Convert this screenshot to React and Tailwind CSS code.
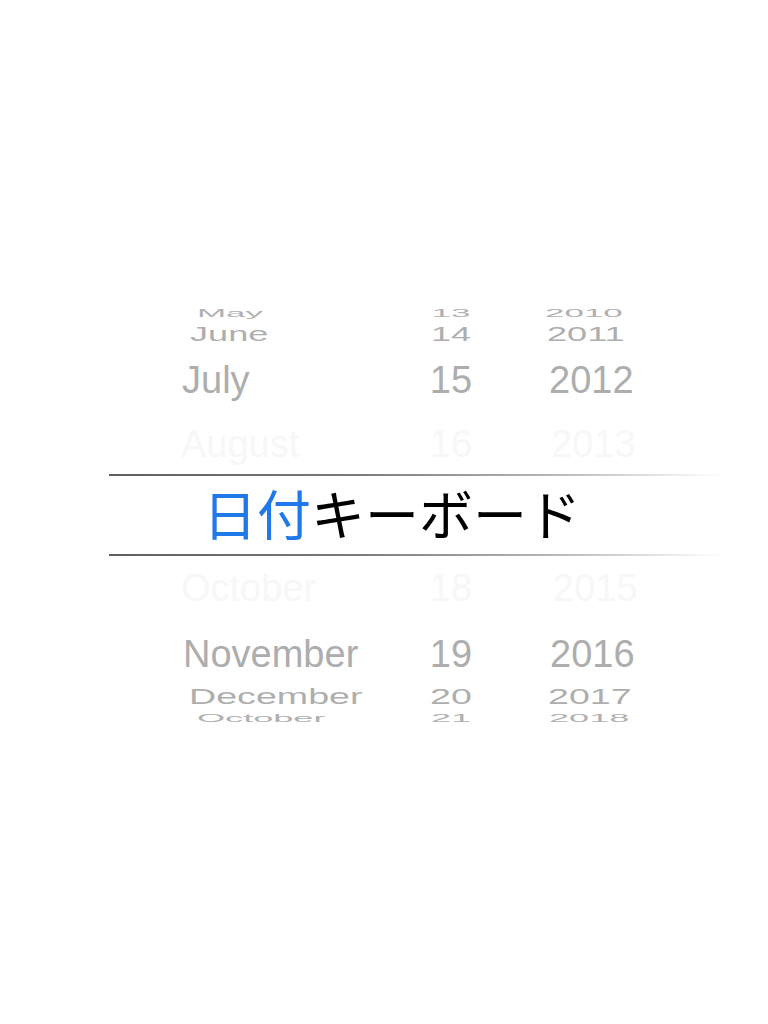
export default function App() {
  const rows1 = [
    { h: 'h-[16px]', m: 'May', d: '13', y: '2010', mc: 'ml-[197px] w-[214px]', yc: 'ml-[54px]', t: 'scale-x-[0.92] scale-y-[0.27]', c: 'text-[#b0b0b0]' },
    { h: 'h-[26px]', m: 'June', d: '14', y: '2011', mc: 'ml-[190px] w-[221px]', yc: 'ml-[56px]', t: 'scale-x-[0.95] scale-y-[0.55]', c: 'text-[#aeaeae]' },
    { h: 'h-[66px]', m: 'July', d: '15', y: '2012', mc: 'ml-[182px] w-[229px]', yc: 'ml-[58px]', t: 'scale-x-[1] scale-y-[1]', c: 'text-[#adadad]' },
    { h: 'h-[61px]', m: 'August', d: '16', y: '2013', mc: 'ml-[181px] w-[230px]', yc: 'ml-[60px]', t: 'scale-x-[1] scale-y-[1]', c: 'text-[#f7f7f7]' },
  ];
  const rows2 = [
    { h: 'h-[63px]', m: 'October', d: '18', y: '2015', mc: 'ml-[181px] w-[230px]', yc: 'ml-[62px]', t: 'scale-x-[1] scale-y-[1]', c: 'text-[#f7f7f7]' },
    { h: 'h-[69px]', m: 'November', d: '19', y: '2016', mc: 'ml-[183px] w-[228px]', yc: 'ml-[59px]', t: 'scale-x-[1] scale-y-[1]', c: 'text-[#adadad]' },
    { h: 'h-[16px]', m: 'December', d: '20', y: '2017', mc: 'ml-[189px] w-[222px]', yc: 'ml-[57px]', t: 'scale-x-[0.99] scale-y-[0.6]', c: 'text-[#aeaeae]' },
    { h: 'h-[28px]', m: 'October', d: '21', y: '2018', mc: 'ml-[197px] w-[214px]', yc: 'ml-[58px]', t: 'scale-x-[0.95] scale-y-[0.3]', c: 'text-[#b0b0b0]' },
  ];

  const Row = ({ r }) => (
    <div className={`flex items-center ${r.h} ${r.c}`}>
      <span className={`block shrink-0 leading-none text-[38px] origin-left ${r.mc} ${r.t}`}>{r.m}</span>
      <span className={`block shrink-0 w-[80px] text-center leading-none text-[38px] origin-center ${r.t}`}>{r.d}</span>
      <span className={`block shrink-0 leading-none text-[38px] origin-left ${r.yc} ${r.t}`}>{r.y}</span>
    </div>
  );

  const Line = () => (
    <div className="ml-[109px] w-[612px] h-[2px] bg-[linear-gradient(to_right,#5f5f5f_0%,#7a7a7a_40%,#b5b5b5_72%,rgba(255,255,255,0)_100%)]" />
  );

  return (
    <div className="w-[768px] h-[1024px] bg-white font-['Liberation_Sans',Arial,sans-serif] overflow-hidden">
      <div className="pt-[305px]">
        {rows1.map((r, i) => (
          <Row key={i} r={r} />
        ))}
        <Line />
        <div className="h-[78px] flex items-center">
          <span className="block ml-[203px] leading-none text-[54px] font-['Noto_Sans_CJK_JP','Noto_Sans_CJK_SC',sans-serif] -mt-[5px]">
            <span className="text-[#2079e8]">日付</span>
            <span className="text-black">キーボード</span>
          </span>
        </div>
        <Line />
        {rows2.map((r, i) => (
          <Row key={i} r={r} />
        ))}
      </div>
    </div>
  );
}
